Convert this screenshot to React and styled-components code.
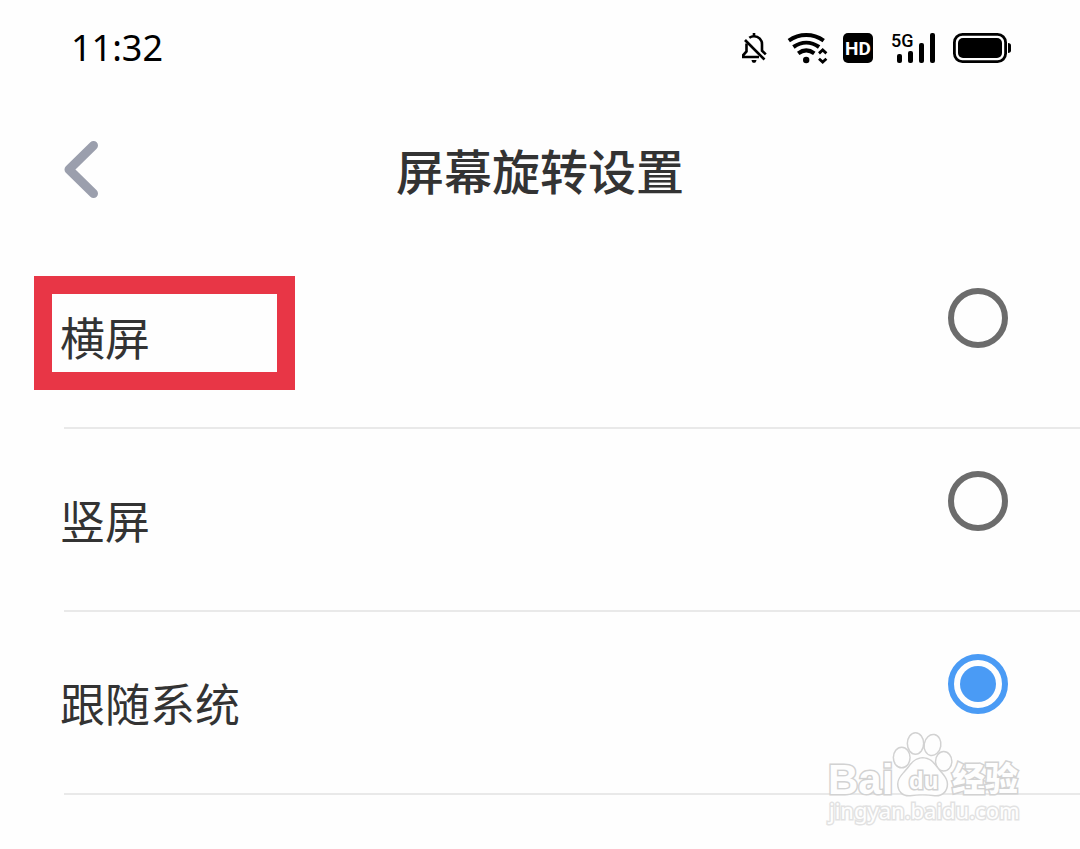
// Packages
import React, { useState } from "react"
import styled, { createGlobalStyle } from "styled-components"

// Data
const options = [
    { value: "landscape", label: "横屏", marked: true },
    { value: "portrait", label: "竖屏" },
    { value: "system", label: "跟随系统" },
]

// Styles
const Colors = {
    Background: "#fefefe",
    Black: "#000000",
    Text: "#333333",
    Back: "#9b9fad",
    Line: "#e9e9e9",
    Ring: "#6c6c6c",
    Primary: "#4a9bf5",
    Mark: "#e83646",
    Watermark: "#d2d2d2",
}

const GlobalStyles = createGlobalStyle`
    * {
        box-sizing: border-box;
    }

    body {
        margin: 0;
        background-color: ${Colors.Background};
        color: ${Colors.Text};
        font-family: "Noto Sans CJK SC", sans-serif;
    }
`

const Page = styled.div`
    position: relative;
    min-height: 100vh;
    overflow: hidden;
`

const StatusBar = styled.div`
    display: flex;
    align-items: center;
    justify-content: space-between;
    height: 96px;
    padding: 0 68px 0 71px;
    color: ${Colors.Black};
`

const Time = styled.time`
    font-family: "Noto Sans", sans-serif;
    font-size: 36px;
    line-height: 48px;
`

const StatusIcons = styled.div`
    display: flex;
    align-items: center;
    gap: 12px;
`

const StatusIcon = styled.svg`
    display: block;
    height: 32px;
    overflow: visible;
    font-family: Roboto, sans-serif;
`

const Header = styled.header`
    display: grid;
    grid-template-columns: 1fr auto 1fr;
    align-items: center;
    height: 150px;
    padding: 0 60px;
`

const BackButton = styled.button`
    justify-self: start;
    padding: 0;
    border: none;
    background: none;
    color: ${Colors.Back};
    cursor: pointer;

    svg {
        display: block;
    }
`

const Title = styled.h1`
    margin: 0 0 4px;
    font-size: 48px;
    font-weight: 500;
    line-height: 60px;
`

const List = styled.div`
    display: flex;
    flex-direction: column;
`

const Row = styled.label`
    display: flex;
    align-items: flex-start;
    justify-content: space-between;
    height: 181px;
    padding: 42px 72px 0 60px;
    cursor: pointer;
`

const RowText = styled.span`
    position: relative;
    margin-top: 19px;
    font-size: 45px;
    line-height: 60px;
`

const Mark = styled.span`
    position: absolute;
    top: -31px;
    left: -26px;
    width: 261px;
    height: 114px;
    border: 18px solid ${Colors.Mark};
    pointer-events: none;
`

const Radio = styled.input`
    appearance: none;
    flex: none;
    width: 60px;
    height: 60px;
    margin: 0;
    padding: 6px;
    border: 6px solid ${Colors.Ring};
    border-radius: 50%;
    cursor: pointer;

    &:checked {
        border-color: ${Colors.Primary};
        background: ${Colors.Primary} content-box;
    }
`

const Divider = styled.hr`
    width: auto;
    height: 2px;
    margin: 0 0 0 64px;
    border: none;
    background-color: ${Colors.Line};
`

const WatermarkLogo = styled.svg`
    position: absolute;
    right: 50px;
    bottom: 19px;
    pointer-events: none;
    fill: ${Colors.Background};
    stroke: ${Colors.Watermark};
    stroke-width: 3px;
    paint-order: stroke;
`

const SilentIcon = () => (
    <StatusIcon
        width="36"
        viewBox="0 0 36 32"
        fill="none"
        stroke="currentColor"
        strokeWidth="2.6"
        aria-label="Silent"
    >
        <path d="M7 8 L26.5 27.5" />
        <path d="M8.5 11.5 V19.5 L5.3 23 V25 H21" />
        <path d="M11.3 5.8 C12.8 4.7 14.3 4.2 16 4.2 C20.8 4.2 24 7.8 24 12.2 V18.6 L27.8 22.4" />
        <path d="M16 1 V4" />
        <path d="M13.5 28 H18.5 C18.2 30 17.4 30.8 16 30.8 C14.6 30.8 13.8 30 13.5 28 Z" fill="currentColor" stroke="none" />
    </StatusIcon>
)

const WifiIcon = () => (
    <StatusIcon
        width="44"
        viewBox="0 0 44 32"
        fill="none"
        stroke="currentColor"
        strokeWidth="4"
        aria-label="Wi-Fi"
    >
        <path d="M2.8 8.6 C13.5 1.2 27 1.2 37.7 8.6" />
        <path d="M7.4 15 C15.5 9.2 25 9.2 33.1 15" />
        <path d="M12.2 21.4 C17.3 17.6 23.2 17.6 28.3 21.4" />
        <circle cx="20.2" cy="28" r="3.2" fill="currentColor" stroke="none" />
        <path d="M33 21.4 L36.7 18 L40.4 21.4 M33 26.7 L36.7 30 L40.4 26.7" strokeWidth="2.8" />
    </StatusIcon>
)

const HdIcon = () => (
    <StatusIcon width="36" viewBox="0 0 36 32" aria-label="HD voice">
        <rect x="1" y="1" width="30" height="30" rx="5" />
        <text x="16" y="23" fontSize="19" fontWeight="700" textAnchor="middle" fill="#fff">
            HD
        </text>
    </StatusIcon>
)

const SignalIcon = () => (
    <StatusIcon width="50" viewBox="0 0 50 32" aria-label="5G signal">
        <text x="1" y="15" fontSize="18" fontWeight="500">
            5G
        </text>
        <rect x="7" y="22" width="5" height="9" rx="2" />
        <rect x="18" y="19" width="5" height="12" rx="2" />
        <rect x="29" y="11" width="5" height="20" rx="2" />
        <rect x="40" y="1" width="5" height="30" rx="2" />
    </StatusIcon>
)

const BatteryIcon = () => (
    <StatusIcon width="60" viewBox="0 0 60 32" aria-label="Battery">
        <rect
            x="2.4"
            y="2.4"
            width="51.2"
            height="27.2"
            rx="8"
            fill="none"
            stroke="currentColor"
            strokeWidth="2.8"
        />
        <rect x="6" y="6" width="44" height="20" rx="5" />
        <path d="M56 11 C58 11 59 12 59 13.5 V18.5 C59 20 58 21 56 21 Z" />
    </StatusIcon>
)

const Watermark = () => (
    <WatermarkLogo width="210" height="102" viewBox="0 0 210 102">
        <ellipse cx="81.7" cy="29.5" rx="7.6" ry="9.6" />
        <ellipse cx="95.5" cy="15.5" rx="7.4" ry="10" />
        <ellipse cx="112.5" cy="17" rx="7.6" ry="9.8" transform="rotate(10 112.5 17)" />
        <ellipse cx="123.7" cy="33.3" rx="7.4" ry="9" />
        <path d="M102.7 30.5 C96 30.5 92 35 88.5 40 C84 46 78.5 49 78.5 56 C78.5 63 83 67.5 90 67 C97 66 108 66 115 67 C122 67.5 126.7 63 126.7 56 C126.7 49 121 46 117 40 C113 35 110 30.5 102.7 30.5 Z" />
        <g fontFamily="Liberation Sans, sans-serif" fontWeight="700">
            <text x="8" y="66" fontSize="42">
                Bai
            </text>
            <text x="89" y="61" fontSize="24">
                du
            </text>
        </g>
        <text x="132" y="63" fontSize="33" fontWeight="900">
            经验
        </text>
        <text x="9" y="91" fontSize="22" fontFamily="Noto Sans, sans-serif" stroke="#e2e2e2">
            jingyan.baidu.com
        </text>
    </WatermarkLogo>
)

const App = () => {
    const [rotation, setRotation] = useState("system")

    return (
        <Page>
            <GlobalStyles />

            <StatusBar>
                <Time>11:32</Time>

                <StatusIcons>
                    <SilentIcon />
                    <WifiIcon />
                    <HdIcon />
                    <SignalIcon />
                    <BatteryIcon />
                </StatusIcons>
            </StatusBar>

            <Header>
                <BackButton type="button" aria-label="返回">
                    <svg width="42" height="62" viewBox="0 0 42 62" fill="none">
                        <path
                            d="M33.5 5.5 L9 29.5 L33.5 53.5"
                            stroke="currentColor"
                            strokeWidth="9"
                            strokeLinecap="round"
                            strokeLinejoin="round"
                        />
                    </svg>
                </BackButton>

                <Title>屏幕旋转设置</Title>
            </Header>

            <List role="radiogroup" aria-label="屏幕旋转设置">
                {options.map(({ value, label, marked }) => (
                    <React.Fragment key={value}>
                        <Row htmlFor={value}>
                            <RowText>
                                {label}
                                {marked && <Mark />}
                            </RowText>

                            <Radio
                                type="radio"
                                name="rotation"
                                id={value}
                                value={value}
                                checked={rotation === value}
                                onChange={() => setRotation(value)}
                            />
                        </Row>

                        <Divider />
                    </React.Fragment>
                ))}
            </List>

            <Watermark />
        </Page>
    )
}

export default App
